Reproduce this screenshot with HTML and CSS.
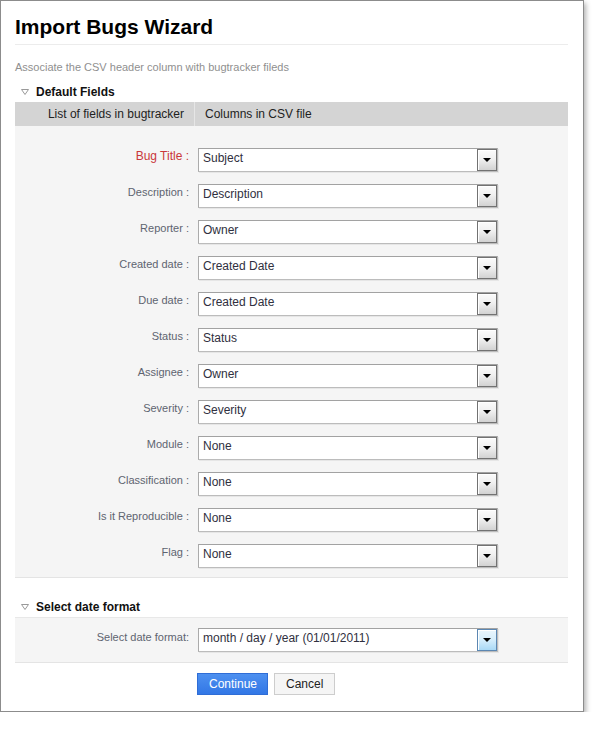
FILE: index.html
```html
<!DOCTYPE html>
<html lang="en">
<head>
    <meta charset="UTF-8">
    <title>Import Bugs Wizard</title>
    <link rel="stylesheet" href="styles.css">
</head>
<body>
    <div class="wizard">
        <h1>Import Bugs Wizard</h1>
        <p class="intro">Associate the CSV header column with bugtracker fileds</p>

        <div class="section-title">
            <svg class="toggle" width="8" height="6" viewBox="0 0 8 6"><polygon points="0.5,0.5 7.5,0.5 4,5.5" fill="#fff" stroke="#999" stroke-width="1"/></svg>
            Default Fields
        </div>
        <div class="map-head">
            <div class="col-left">List of fields in bugtracker</div>
            <div class="col-right">Columns in CSV file</div>
        </div>
        <div class="map-body">
            <div class="row">
                <label class="required">Bug Title :</label>
                <div class="select">Subject<span class="arrow"></span></div>
            </div>
            <div class="row">
                <label>Description :</label>
                <div class="select">Description<span class="arrow"></span></div>
            </div>
            <div class="row">
                <label>Reporter :</label>
                <div class="select">Owner<span class="arrow"></span></div>
            </div>
            <div class="row">
                <label>Created date :</label>
                <div class="select">Created Date<span class="arrow"></span></div>
            </div>
            <div class="row">
                <label>Due date :</label>
                <div class="select">Created Date<span class="arrow"></span></div>
            </div>
            <div class="row">
                <label>Status :</label>
                <div class="select">Status<span class="arrow"></span></div>
            </div>
            <div class="row">
                <label>Assignee :</label>
                <div class="select">Owner<span class="arrow"></span></div>
            </div>
            <div class="row">
                <label>Severity :</label>
                <div class="select">Severity<span class="arrow"></span></div>
            </div>
            <div class="row">
                <label>Module :</label>
                <div class="select">None<span class="arrow"></span></div>
            </div>
            <div class="row">
                <label>Classification :</label>
                <div class="select">None<span class="arrow"></span></div>
            </div>
            <div class="row">
                <label>Is it Reproducible :</label>
                <div class="select">None<span class="arrow"></span></div>
            </div>
            <div class="row">
                <label>Flag :</label>
                <div class="select">None<span class="arrow"></span></div>
            </div>
        </div>

        <div class="section-title second">
            <svg class="toggle" width="8" height="6" viewBox="0 0 8 6"><polygon points="0.5,0.5 7.5,0.5 4,5.5" fill="#fff" stroke="#999" stroke-width="1"/></svg>
            Select date format
        </div>
        <div class="date-body">
            <div class="row">
                <label>Select date format:</label>
                <div class="select focus">month / day / year (01/01/2011)<span class="arrow"></span></div>
            </div>
        </div>

        <div class="actions">
            <button class="btn primary">Continue</button>
            <button class="btn">Cancel</button>
        </div>
    </div>
</body>
</html>
```

FILE: styles.css
```css
body {
    margin: 0;
    padding: 0;
    background-color: #fff;
    font-family: "Liberation Sans", Arial, sans-serif;
}
.wizard {
    box-sizing: border-box;
    width: 584px;
    height: 712px;
    border: 1px solid #8c8c8c;
    padding: 0 15px 0 14px;
    box-shadow: 2px 3px 5px rgba(0, 0, 0, 0.3);
}
h1 {
    margin: 0;
    padding: 14px 0 5px 0;
    font-size: 21px;
    line-height: 24px;
    font-weight: bold;
    color: #000;
    border-bottom: 1px solid #ececec;
}
.intro {
    margin: 15px 0 0 0;
    font-size: 11px;
    line-height: 14px;
    color: #8f8f8f;
}
.section-title {
    margin-top: 10px;
    height: 18px;
    line-height: 16px;
    font-size: 12px;
    font-weight: bold;
    color: #111;
    display: flex;
    align-items: flex-start;
}
.section-title.second {
    margin-top: 21px;
}
.toggle {
    margin: 5px 7px 0 6px;
}
.map-head {
    display: flex;
    height: 24px;
    line-height: 24px;
    font-size: 12px;
    color: #222;
    background-color: #d4d4d4;
}
.col-left {
    width: 180px;
    text-align: right;
    padding-right: 10px;
    box-sizing: border-box;
    border-right: 1px solid #e6e6e6;
}
.col-right {
    padding-left: 10px;
}
.map-body {
    background-color: #f5f5f5;
    padding: 22px 0 9px 0;
    border-bottom: 1px solid #e4e4e4;
    display: flex;
    flex-direction: column;
    gap: 12px;
}
.row {
    display: flex;
    align-items: flex-start;
    height: 24px;
}
.row label {
    width: 174px;
    margin-right: 9px;
    text-align: right;
    font-size: 11px;
    line-height: 14px;
    padding-top: 1px;
    color: #5e6470;
}
.row label.required {
    font-size: 12px;
    line-height: 16px;
    padding-top: 0;
    color: #c9373a;
}
.select {
    position: relative;
    box-sizing: border-box;
    width: 300px;
    height: 24px;
    background-color: #fff;
    border: 1px solid #bcbcbc;
    border-top-color: #a2a2a2;
    border-left-color: #ababab;
    box-shadow: 1px 1px 0 #e6e6e6;
    padding: 0 0 0 4px;
    font-size: 12px;
    line-height: 18px;
    color: #303040;
}
.arrow {
    position: absolute;
    top: 0;
    right: 0;
    width: 20px;
    height: 22px;
    box-sizing: border-box;
    border: 1px solid #727272;
    box-shadow: inset 1px 1px 0 #fff;
    background: linear-gradient(#fbfbfb, #f0f0f0 45%, #d2d2d2);
}
.arrow::after {
    content: "";
    position: absolute;
    left: 5px;
    top: 8px;
    border-left: 4px solid transparent;
    border-right: 4px solid transparent;
    border-top: 4px solid #000;
}
.select.focus .arrow {
    border-color: #5c87b2;
    background: linear-gradient(#eaf6fd, #d8effc 45%, #a9d9f6);
}
.date-body {
    background-color: #f5f5f5;
    border-top: 1px solid #e8e8e8;
    border-bottom: 1px solid #e4e4e4;
    padding: 10px 0;
}
.date-body .row label {
    padding-top: 2px;
}
.actions {
    margin-top: 10px;
    padding-left: 182px;
    display: flex;
    gap: 6px;
}
.btn {
    box-sizing: border-box;
    height: 22px;
    padding: 0 11px;
    font-family: "Liberation Sans", Arial, sans-serif;
    font-size: 12px;
    color: #222;
    background-color: #f5f5f5;
    border: 1px solid #cdcdcd;
    border-radius: 0;
    cursor: pointer;
}
.btn.primary {
    width: 71px;
    color: #fff;
    border-color: #2f6dd6;
    background: linear-gradient(#4d90f0, #3277e6);
}
```
